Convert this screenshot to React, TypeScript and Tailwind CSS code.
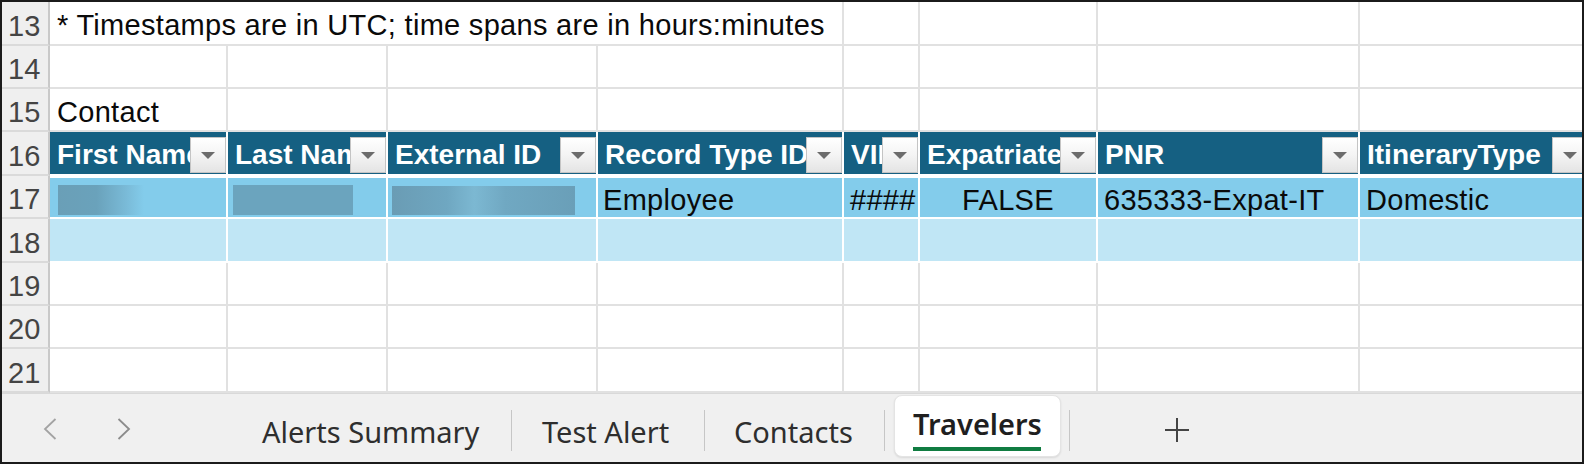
import React from "react";

const HDR_ROW =
  "w-[48px] shrink-0 bg-[#efefef] border-r-2 border-r-[#c9c9c9] border-b-2 border-b-[#dadada] flex items-end pl-[6px] pb-[3px] text-[29px] leading-none text-[#444444]";

function RowNum({ n }: { n: number }) {
  return <div className={HDR_ROW}>{n}</div>;
}

const GRID = "shrink-0 border-r-2 border-b-2 border-[#e1e1e1] bg-white";
const WIDTHS = [
  "w-[178px]",
  "w-[160px]",
  "w-[210px]",
  "w-[246px]",
  "w-[76px]",
  "w-[178px]",
  "w-[262px]",
  "w-[230px]",
];

function EmptyCells() {
  return (
    <>
      {WIDTHS.map((w, i) => (
        <div key={i} className={`${GRID} ${w}`} />
      ))}
    </>
  );
}

function Dropdown() {
  return (
    <div className="w-[36px] h-[36px] mb-[1px] shrink-0 border border-[#c4c4c4] bg-[linear-gradient(180deg,#ffffff_0%,#f4f4f4_50%,#e4e4e4_100%)] flex items-center justify-center">
      <svg width="14" height="7" viewBox="0 0 14 7">
        <polygon points="0,0 14,0 7,7" fill="#6c6c6c" />
      </svg>
    </div>
  );
}

function HeadCell({ w, label }: { w: string; label: string }) {
  return (
    <div
      className={`${w} shrink-0 bg-[#156082] border-r-2 border-b-2 border-white flex items-end`}
    >
      <div className="flex-1 min-w-0 overflow-hidden whitespace-nowrap pl-[7px] pb-[5px] text-[28px] leading-none font-bold text-white">
        {label}
      </div>
      <Dropdown />
    </div>
  );
}

const TXT = "text-[29px] leading-none tracking-[0.3px] text-[#0a0a0a] whitespace-nowrap";
const BAND1 = `shrink-0 bg-[#83cceb] border-r-2 border-t-2 border-b-2 border-white flex items-end pb-[2px] overflow-hidden ${TXT}`;
const BAND2 = "shrink-0 bg-[#c0e6f5] border-r-2 border-b-2 border-white";

export default function App() {
  return (
    <div className="w-[1584px] h-[464px] border-2 border-[#1b1b1b] bg-white overflow-hidden flex flex-col font-['Liberation_Sans',Arial,sans-serif]">
      {/* grid */}
      <div className="flex flex-col h-[391px] shrink-0 overflow-hidden">
        {/* row 13 */}
        <div className="flex shrink-0 h-[44px]">
          <RowNum n={13} />
          <div className={`${GRID} w-[794px] flex items-end pl-[7px] pb-[4px] ${TXT}`}>
            * Timestamps are in UTC; time spans are in hours:minutes
          </div>
          <div className={`${GRID} w-[76px]`} />
          <div className={`${GRID} w-[178px]`} />
          <div className={`${GRID} w-[262px]`} />
          <div className={`${GRID} w-[230px]`} />
        </div>
        {/* row 14 */}
        <div className="flex shrink-0 h-[43px]">
          <RowNum n={14} />
          <EmptyCells />
        </div>
        {/* row 15 */}
        <div className="flex shrink-0 h-[43px]">
          <RowNum n={15} />
          <div className={`${GRID} w-[178px] flex items-end pl-[7px] pb-[3px] ${TXT}`}>
            Contact
          </div>
          {WIDTHS.slice(1).map((w, i) => (
            <div key={i} className={`${GRID} ${w}`} />
          ))}
        </div>
        {/* row 16 header */}
        <div className="flex shrink-0 h-[44px]">
          <RowNum n={16} />
          <HeadCell w="w-[178px]" label="First Name" />
          <HeadCell w="w-[160px]" label="Last Name" />
          <HeadCell w="w-[210px]" label="External ID" />
          <HeadCell w="w-[246px]" label="Record Type ID" />
          <HeadCell w="w-[76px]" label="VIP" />
          <HeadCell w="w-[178px]" label="Expatriate" />
          <HeadCell w="w-[262px]" label="PNR" />
          <HeadCell w="w-[230px]" label="ItineraryType" />
        </div>
        {/* row 17 */}
        <div className="flex shrink-0 h-[43px]">
          <RowNum n={17} />
          <div className={`${BAND1} w-[178px] pb-[1px]`}>
            <div className="ml-[8px] w-[86px] h-[30px] bg-[linear-gradient(90deg,#6a9fb7_0%,#6aa2bb_45%,#7abbd8_80%,#83cceb_100%)]" />
          </div>
          <div className={`${BAND1} w-[160px] pb-[1px]`}>
            <div className="ml-[5px] w-[120px] h-[30px] bg-[#6ba4be]" />
          </div>
          <div className={`${BAND1} w-[210px] pb-[1px]`}>
            <div className="ml-[4px] w-[183px] h-[29px] bg-[linear-gradient(90deg,#6a9cb4_0%,#6fa7c1_30%,#7cb8d2_45%,#70a8c2_62%,#6a9fb8_100%)]" />
          </div>
          <div className={`${BAND1} w-[246px] pl-[5px]`}>Employee</div>
          <div className={`${BAND1} w-[76px] pl-[6px]`}>####</div>
          <div className={`${BAND1} w-[178px] justify-center`}>FALSE</div>
          <div className={`${BAND1} w-[262px] pl-[6px]`}>635333-Expat-IT</div>
          <div className={`${BAND1} w-[230px] pl-[6px]`}>Domestic</div>
        </div>
        {/* row 18 */}
        <div className="flex shrink-0 h-[44px]">
          <RowNum n={18} />
          {WIDTHS.map((w, i) => (
            <div key={i} className={`${BAND2} ${w}`} />
          ))}
        </div>
        {/* rows 19-21 */}
        <div className="flex shrink-0 h-[43px]">
          <RowNum n={19} />
          <EmptyCells />
        </div>
        <div className="flex shrink-0 h-[43px]">
          <RowNum n={20} />
          <EmptyCells />
        </div>
        <div className="flex shrink-0 h-[44px]">
          <RowNum n={21} />
          <EmptyCells />
        </div>
      </div>

      {/* sheet tab bar */}
      <div className="flex h-[69px] shrink-0 bg-[#f0f0f0] border-t border-[#d9d9d9] font-['Noto_Sans',sans-serif] text-[29px] leading-none text-[#2e2e2e]">
        <div className="w-[232px] shrink-0 flex items-start pt-[24px] pl-[41px]">
          <svg width="14" height="22" viewBox="0 0 14 22">
            <polyline
              points="12.5,1 2,11 12.5,21"
              fill="none"
              stroke="#a3a3a3"
              strokeWidth="1.8"
            />
          </svg>
          <svg width="14" height="22" viewBox="0 0 14 22" className="ml-[60px]">
            <polyline
              points="1.5,1 12,11 1.5,21"
              fill="none"
              stroke="#8c8c8c"
              strokeWidth="1.8"
            />
          </svg>
        </div>
        <div className="w-[277px] shrink-0 pl-[28px] pt-[23px] whitespace-nowrap">
          Alerts Summary
        </div>
        <div className="w-px h-[41px] mt-[16px] bg-[#c6c6c6] shrink-0" />
        <div className="w-[192px] shrink-0 pl-[30px] pt-[23px] whitespace-nowrap">
          Test Alert
        </div>
        <div className="w-px h-[41px] mt-[16px] bg-[#c6c6c6] shrink-0" />
        <div className="w-[179px] shrink-0 pl-[29px] pt-[23px] whitespace-nowrap">
          Contacts
        </div>
        <div className="w-px h-[41px] mt-[16px] bg-[#c6c6c6] shrink-0" />
        <div className="ml-[9px] mt-[1px] h-[62px] w-[167px] shrink-0 bg-white rounded-[8px] border border-[#e4e4e4] shadow-[0_1px_2px_rgba(0,0,0,0.10)] flex flex-col items-start pl-[18px] pt-[13px]">
          <span className="font-semibold text-[#1f1f1f] whitespace-nowrap">
            Travelers
          </span>
          <div className="mt-[9px] h-[4px] w-[128px] bg-[#107c41]" />
        </div>
        <div className="ml-[8px] w-px h-[41px] mt-[16px] bg-[#c6c6c6] shrink-0" />
        <div className="ml-[95px] mt-[24px] shrink-0">
          <svg width="24" height="24" viewBox="0 0 24 24">
            <line x1="12" y1="0" x2="12" y2="24" stroke="#444444" strokeWidth="2" />
            <line x1="0" y1="12" x2="24" y2="12" stroke="#444444" strokeWidth="2" />
          </svg>
        </div>
      </div>
    </div>
  );
}
